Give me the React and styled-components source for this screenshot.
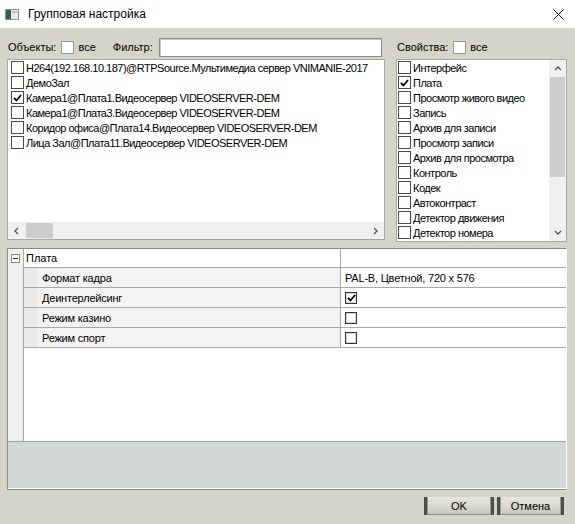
import React from "react";
import styled, { createGlobalStyle } from "styled-components";

const objects = [
  { name: "H264(192.168.10.187)@RTPSource.Мультимедиа сервер VNIMANIE-2017", checked: false },
  { name: "ДемоЗал", checked: false },
  { name: "Камера1@Плата1.Видеосервер VIDEOSERVER-DEM", checked: true },
  { name: "Камера1@Плата3.Видеосервер VIDEOSERVER-DEM", checked: false },
  { name: "Коридор офиса@Плата14.Видеосервер VIDEOSERVER-DEM", checked: false },
  { name: "Лица Зал@Плата11.Видеосервер VIDEOSERVER-DEM", checked: false },
];

const properties = [
  { name: "Интерфейс", checked: false },
  { name: "Плата", checked: true },
  { name: "Просмотр живого видео", checked: false },
  { name: "Запись", checked: false },
  { name: "Архив для записи", checked: false },
  { name: "Просмотр записи", checked: false },
  { name: "Архив для просмотра", checked: false },
  { name: "Контроль", checked: false },
  { name: "Кодек", checked: false },
  { name: "Автоконтраст", checked: false },
  { name: "Детектор движения", checked: false },
  { name: "Детектор номера", checked: false },
];

const gridRows = [
  { name: "Формат кадра", value: "PAL-B, Цветной, 720 x 576" },
  { name: "Деинтерлейсинг", check: true },
  { name: "Режим казино", check: false },
  { name: "Режим спорт", check: false },
];

const Check = () => (
  <svg width="9" height="8" viewBox="0 0 9 8">
    <path d="M1 4 L3.5 6.5 L8 1" fill="none" stroke="#000" strokeWidth="1.8" />
  </svg>
);

const Chevron = ({ dir }) => {
  const paths = {
    left: "M5 1 L2 4 L5 7",
    right: "M2 1 L5 4 L2 7",
    up: "M1 5 L4 2 L7 5",
    down: "M1 2 L4 5 L7 2",
  };
  return (
    <svg width="8" height="8" viewBox="0 0 8 8">
      <path d={paths[dir]} fill="none" stroke="#505050" strokeWidth="1.3" />
    </svg>
  );
};

const App = () => {
  return (
    <>
      <GlobalStyle />
      <Window>
        <TitleBar>
          <svg width="14" height="11" viewBox="0 0 14 11">
            <rect x="0.5" y="0.5" width="13" height="10" fill="#e8ece8" stroke="#8a9490" />
            <rect x="1" y="1" width="5" height="9" fill="#2f5f52" />
            <rect x="7" y="2" width="5" height="2" fill="#b8c0bc" />
          </svg>
          <TitleText>Групповая настройка</TitleText>
          <CloseButton>
            <svg width="11" height="11" viewBox="0 0 11 11">
              <path d="M0.5 0.5 L10.5 10.5 M10.5 0.5 L0.5 10.5" stroke="#111" strokeWidth="1" />
            </svg>
          </CloseButton>
        </TitleBar>

        <Body>
          <TopArea>
            <HeaderRow>
              <Label>Объекты:</Label>
              <HeaderBox />
              <Label>все</Label>
              <FilterLabel>Фильтр:</FilterLabel>
              <FilterInput />
            </HeaderRow>
            <HeaderRow>
              <Label>Свойства:</Label>
              <HeaderBox />
              <Label>все</Label>
            </HeaderRow>

            <ListBox>
              <ListItems $pad={3}>
                {objects.map((o, i) => (
                  <Item key={i}>
                    <Box>{o.checked && <Check />}</Box>
                    <ItemText>{o.name}</ItemText>
                  </Item>
                ))}
              </ListItems>
              <HScroll>
                <ArrowBtn>
                  <Chevron dir="left" />
                </ArrowBtn>
                <HTrack>
                  <HThumb />
                </HTrack>
                <ArrowBtn>
                  <Chevron dir="right" />
                </ArrowBtn>
              </HScroll>
            </ListBox>

            <SideListBox>
              <ListItems $pad={1}>
                {properties.map((p, i) => (
                  <Item key={i}>
                    <Box>{p.checked && <Check />}</Box>
                    <ItemText>{p.name}</ItemText>
                  </Item>
                ))}
              </ListItems>
              <VScroll>
                <VArrowBtn>
                  <Chevron dir="up" />
                </VArrowBtn>
                <VTrack>
                  <VThumb />
                </VTrack>
                <VArrowBtn>
                  <Chevron dir="down" />
                </VArrowBtn>
              </VScroll>
            </SideListBox>
          </TopArea>

          <PropertyGrid>
            <GridBody>
              <Gutter>
                <GutterCell>
                  <svg width="9" height="9" viewBox="0 0 9 9">
                    <rect x="0.5" y="0.5" width="8" height="8" fill="#fff" stroke="#8a8a8a" />
                    <path d="M2 4.5 H7" stroke="#333" strokeWidth="1" />
                  </svg>
                </GutterCell>
              </Gutter>
              <Rows>
                <GridRow $height={19}>
                  <CategoryName>Плата</CategoryName>
                  <ValueCell />
                </GridRow>
                {gridRows.map((r, i) => (
                  <GridRow key={i} $height={20}>
                    <NameCell>
                      <Indent />
                      <NameText>{r.name}</NameText>
                    </NameCell>
                    <ValueCell>
                      {r.value}
                      {r.check !== undefined && (
                        <GridBox>{r.check && <Check />}</GridBox>
                      )}
                    </ValueCell>
                  </GridRow>
                ))}
              </Rows>
            </GridBody>
            <Description />
          </PropertyGrid>

          <Footer>
            <Button>OK</Button>
            <Button $narrow>Отмена</Button>
          </Footer>
        </Body>
      </Window>
    </>
  );
};

export default App;

const GlobalStyle = createGlobalStyle`
  html, body {
    margin: 0;
    padding: 0;
    background: #d4d5c8;
  }
  body {
    font-family: "Liberation Sans", Arial, sans-serif;
    font-size: 11px;
    color: #000;
  }
`;

const Window = styled.div`
  width: 575px;
  height: 524px;
  background: #d4d5c8;
  display: flex;
  flex-direction: column;
  overflow: hidden;
`;

const TitleBar = styled.div`
  height: 28px;
  flex-shrink: 0;
  background: #fff;
  display: flex;
  align-items: center;
  padding-left: 5px;
`;

const TitleText = styled.span`
  margin-left: 9px;
  font-size: 12px;
  color: #000;
`;

const CloseButton = styled.div`
  margin-left: auto;
  width: 34px;
  height: 28px;
  display: flex;
  align-items: center;
  justify-content: center;
`;

const Body = styled.div`
  flex: 1;
  display: flex;
  flex-direction: column;
  padding: 9px 8px 0 7px;
`;

const TopArea = styled.div`
  display: grid;
  grid-template-columns: 378px 171px;
  grid-template-rows: 20px 181px;
  column-gap: 11px;
  row-gap: 2px;
`;

const HeaderRow = styled.div`
  display: flex;
  align-items: center;
  padding-left: 1px;
`;

const Label = styled.span`
  white-space: nowrap;
`;

const FilterLabel = styled.span`
  margin-left: 17px;
  width: 46px;
`;

const HeaderBox = styled.span`
  width: 11px;
  height: 11px;
  margin: 0 4px 0 5px;
  background: #fff;
  border: 1px solid #9a9a9a;
`;

const FilterInput = styled.div`
  width: 221px;
  height: 17px;
  background: #fff;
  border: 1px solid #8a8a8a;
  box-shadow: inset 1px 1px 0 #c8c8c8;
`;

const ListBox = styled.div`
  display: flex;
  flex-direction: column;
  background: #fff;
  border: 1px solid #a5a5a5;
  overflow: hidden;
`;

const SideListBox = styled.div`
  display: flex;
  background: #fff;
  border: 1px solid #a5a5a5;
  height: 181px;
  overflow: hidden;
`;

const ListItems = styled.div`
  flex: 1;
  padding: 0 0 0 ${(p) => p.$pad}px;
  overflow: hidden;
`;

const Item = styled.div`
  height: 15px;
  display: flex;
  align-items: center;
  white-space: nowrap;
`;

const Box = styled.span`
  flex-shrink: 0;
  width: 11px;
  height: 11px;
  background: #fff;
  border: 1px solid #4a4a4a;
  display: flex;
  align-items: center;
  justify-content: center;
`;

const ItemText = styled.span`
  margin-left: 2px;
  letter-spacing: -0.5px;
`;

const HScroll = styled.div`
  height: 17px;
  display: flex;
  background: #f0f0f0;
`;

const ArrowBtn = styled.div`
  width: 17px;
  display: flex;
  align-items: center;
  justify-content: center;
`;

const HTrack = styled.div`
  flex: 1;
  display: flex;
  align-items: center;
`;

const HThumb = styled.div`
  width: 27px;
  height: 15px;
  margin-left: 1px;
  background: #cdcdcd;
`;

const VScroll = styled.div`
  width: 17px;
  display: flex;
  flex-direction: column;
  background: #f0f0f0;
`;

const VArrowBtn = styled.div`
  height: 17px;
  display: flex;
  align-items: center;
  justify-content: center;
`;

const VTrack = styled.div`
  flex: 1;
  display: flex;
  justify-content: center;
`;

const VThumb = styled.div`
  width: 15px;
  height: 100px;
  background: #cdcdcd;
`;

const PropertyGrid = styled.div`
  margin-top: 8px;
  height: 240px;
  display: flex;
  flex-direction: column;
  border: 1px solid #8c8c8c;
  border-right-color: #ffffff;
  width: 558px;
`;

const GridBody = styled.div`
  flex: 1;
  display: flex;
  background: #fff;
`;

const Gutter = styled.div`
  width: 15px;
  background: #efefec;
  border-right: 1px solid #a9a9a9;
`;

const GutterCell = styled.div`
  height: 18px;
  display: flex;
  align-items: center;
  justify-content: center;
`;

const Rows = styled.div`
  flex: 1;
  display: flex;
  flex-direction: column;
`;

const GridRow = styled.div`
  height: ${(p) => p.$height}px;
  display: grid;
  grid-template-columns: 317px 1fr;
  border-bottom: 1px solid #a8a8a8;
  box-sizing: border-box;
`;

const CategoryName = styled.div`
  display: flex;
  align-items: center;
  padding-left: 2px;
  border-right: 1px solid #a8a8a8;
  background: #fff;
`;

const NameCell = styled.div`
  display: flex;
  border-right: 1px solid #a8a8a8;
  background: #f3f3f3;
`;

const Indent = styled.div`
  width: 14px;
  background: #eaeaea;
`;

const NameText = styled.div`
  display: flex;
  align-items: center;
  padding-left: 4px;
  letter-spacing: -0.2px;
`;

const ValueCell = styled.div`
  display: flex;
  align-items: center;
  padding-left: 4px;
  background: #fff;
  letter-spacing: -0.2px;
`;

const GridBox = styled.span`
  width: 10px;
  height: 10px;
  border: 1px solid #333;
  box-shadow: inset 0 0 0 1px #d8d8d8;
  background: #fff;
  display: flex;
  align-items: center;
  justify-content: center;
`;

const Description = styled.div`
  height: 46px;
  background: #d1d8d5;
  border-top: 1px solid #a0a0a0;
  border-bottom: 1px solid #ffffff;
`;

const Footer = styled.div`
  display: flex;
  justify-content: flex-end;
  gap: 3px;
  margin-top: 7px;
  padding-right: 3px;
`;

const Button = styled.button`
  width: ${(p) => (p.$narrow ? 67 : 70)}px;
  height: 18px;
  padding: 0;
  font-family: "Liberation Sans", Arial, sans-serif;
  font-size: 11px;
  color: #000;
  background: linear-gradient(#e6e6da, #d6d6ca 60%, #c4c4b8);
  border: none;
  border-left: 3px solid #4e4e46;
  border-right: 3px solid #4e4e46;
  box-shadow: inset 1px 0 0 #9a9a90, inset -1px 0 0 #9a9a90, inset 0 -1px 0 #8c8c82;
  cursor: pointer;
`;
